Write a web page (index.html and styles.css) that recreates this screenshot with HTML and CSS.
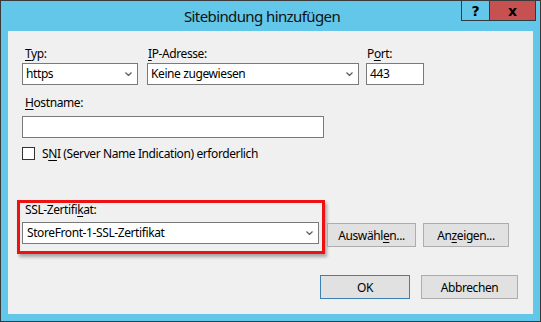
FILE: index.html
```html
<!DOCTYPE html>
<html lang="de">
<head>
    <meta charset="UTF-8">
    <title>Sitebindung hinzufügen</title>
    <link rel="stylesheet" href="styles.css">
</head>
<body>
    <div class="window">
        <div class="titlebar">
            <div class="title">Sitebindung hinzufügen</div>
            <div class="caption">
                <span class="cap help">?</span>
                <span class="cap close">x</span>
            </div>
        </div>
        <div class="client">
            <div class="row top-row">
                <div class="field f-type">
                    <label><u>T</u>yp:</label>
                    <div class="combo">https<svg class="chev" width="7" height="4" viewBox="0 0 7 4"><path d="M0.5 0.5 L3.5 3.5 L6.5 0.5" fill="none" stroke="#606060" stroke-width="1.3"/></svg></div>
                </div>
                <div class="field f-ip">
                    <label><u>I</u>P-Adresse:</label>
                    <div class="combo">Keine zugewiesen<svg class="chev" width="7" height="4" viewBox="0 0 7 4"><path d="M0.5 0.5 L3.5 3.5 L6.5 0.5" fill="none" stroke="#606060" stroke-width="1.3"/></svg></div>
                </div>
                <div class="field f-port">
                    <label>P<u>o</u>rt:</label>
                    <div class="input">443</div>
                </div>
            </div>
            <div class="field f-host">
                <label><u>H</u>ostname:</label>
                <div class="input"></div>
            </div>
            <div class="check">
                <span class="box"></span>
                <span>S<u>N</u>I (Server Name Indication) erforderlich</span>
            </div>
            <div class="row cert-row">
                <div class="cert">
                    <label>SSL-Zertifi<u>k</u>at:</label>
                    <div class="combo">StoreFront-1-SSL-Zertifikat<svg class="chev" width="7" height="4" viewBox="0 0 7 4"><path d="M0.5 0.5 L3.5 3.5 L6.5 0.5" fill="none" stroke="#606060" stroke-width="1.3"/></svg></div>
                </div>
                <button class="btn b-select">Auswähl<u>e</u>n...</button>
                <button class="btn b-show">An<u>z</u>eigen...</button>
            </div>
            <div class="row footer">
                <button class="btn b-ok">OK</button>
                <button class="btn b-cancel">Abbrechen</button>
            </div>
        </div>
    </div>
</body>
</html>
```

FILE: styles.css
```css
* {
    margin: 0;
    padding: 0;
    box-sizing: border-box;
}
body {
    background-color: #fff;
    font-family: "Noto Sans", "Open Sans", sans-serif;
    font-size: 12px;
    letter-spacing: -0.4px;
    color: #000;
}
u {
    text-decoration: underline;
    text-underline-offset: 2px;
}

.window {
    width: 541px;
    height: 322px;
    border: 1px solid #3a3a3a;
    background-color: #62c7e9;
    display: flex;
    flex-direction: column;
}

.titlebar {
    height: 30px;
    display: flex;
    align-items: flex-start;
}
.title {
    flex: 1;
    padding-left: 62px;
    padding-top: 5px;
    text-align: center;
    font-size: 15px;
    letter-spacing: -0.6px;
    line-height: 20px;
    color: #111;
}
.caption {
    display: flex;
    margin-right: 4px;
}
.cap {
    height: 20px;
    border: 1px solid #2f3b40;
    border-top: 0 none;
    display: flex;
    align-items: center;
    justify-content: center;
    font-family: "DejaVu Sans", sans-serif;
    font-weight: bold;
    font-size: 14px;
    letter-spacing: 0;
    color: #000;
}
.help {
    width: 29px;
    background-color: #62c7e9;
}
.close {
    width: 47px;
    margin-left: -1px;
    background-color: #c75050;
}

.client {
    flex: 1;
    margin: 0 7px 7px;
    background-color: #f0f0f0;
    padding: 15px 0 0 14px;
    display: flex;
    flex-direction: column;
}

.row {
    display: flex;
}
.field label {
    display: block;
    line-height: 15px;
    height: 15px;
    margin-bottom: 2px;
    padding-left: 1px;
    white-space: nowrap;
}
.f-type label { padding-left: 3px; }
.f-type { width: 116px; }
.f-ip { width: 212px; margin-left: 9px; }
.f-port { width: 58px; margin-left: 7px; }

.combo, .input {
    height: 22px;
    border: 1px solid #7a7a7a;
    background-color: #fff;
    padding: 0 5px 0 3px;
    line-height: 20px;
    white-space: nowrap;
    display: flex;
    align-items: center;
    justify-content: space-between;
}
.input {
    justify-content: flex-start;
}
.chev {
    flex: none;
}

.f-host {
    margin-top: 10px;
    width: 302px;
}
.f-host label {
    padding-left: 3px;
    margin-bottom: 6px;
}

.check {
    margin-top: 9px;
    display: flex;
    align-items: center;
    height: 13px;
    line-height: 13px;
    white-space: nowrap;
}
.check .box {
    width: 13px;
    height: 13px;
    border: 1px solid #333;
    background-color: #fff;
    margin-right: 7px;
}

.cert-row {
    margin-top: 40px;
    margin-left: -5px;
    align-items: flex-start;
}
.cert {
    width: 308px;
    border: 3px solid #ee1111;
    padding: 0 3px 7px 2px;
    box-shadow: 2px 3px 3px rgba(0, 0, 0, 0.3);
}
.cert label {
    display: block;
    line-height: 14px;
    height: 14px;
    margin-bottom: 5px;
    padding-left: 3px;
}
.cert .combo {
    padding-left: 4px;
}

.btn {
    height: 24px;
    border: 1px solid #adadad;
    background-color: #e1e1e1;
    font-family: inherit;
    font-size: 12px;
    letter-spacing: -0.4px;
    color: #000;
    text-align: center;
}
.b-select {
    width: 89px;
    margin: 23px 0 0 2px;
}
.b-show {
    width: 86px;
    margin: 23px 0 0 7px;
}

.footer {
    margin-top: 21px;
    justify-content: flex-end;
    padding-right: 15px;
}
.b-ok {
    width: 90px;
    border-color: #3c7fb1;
}
.b-cancel {
    width: 97px;
    margin-left: 11px;
}
```
